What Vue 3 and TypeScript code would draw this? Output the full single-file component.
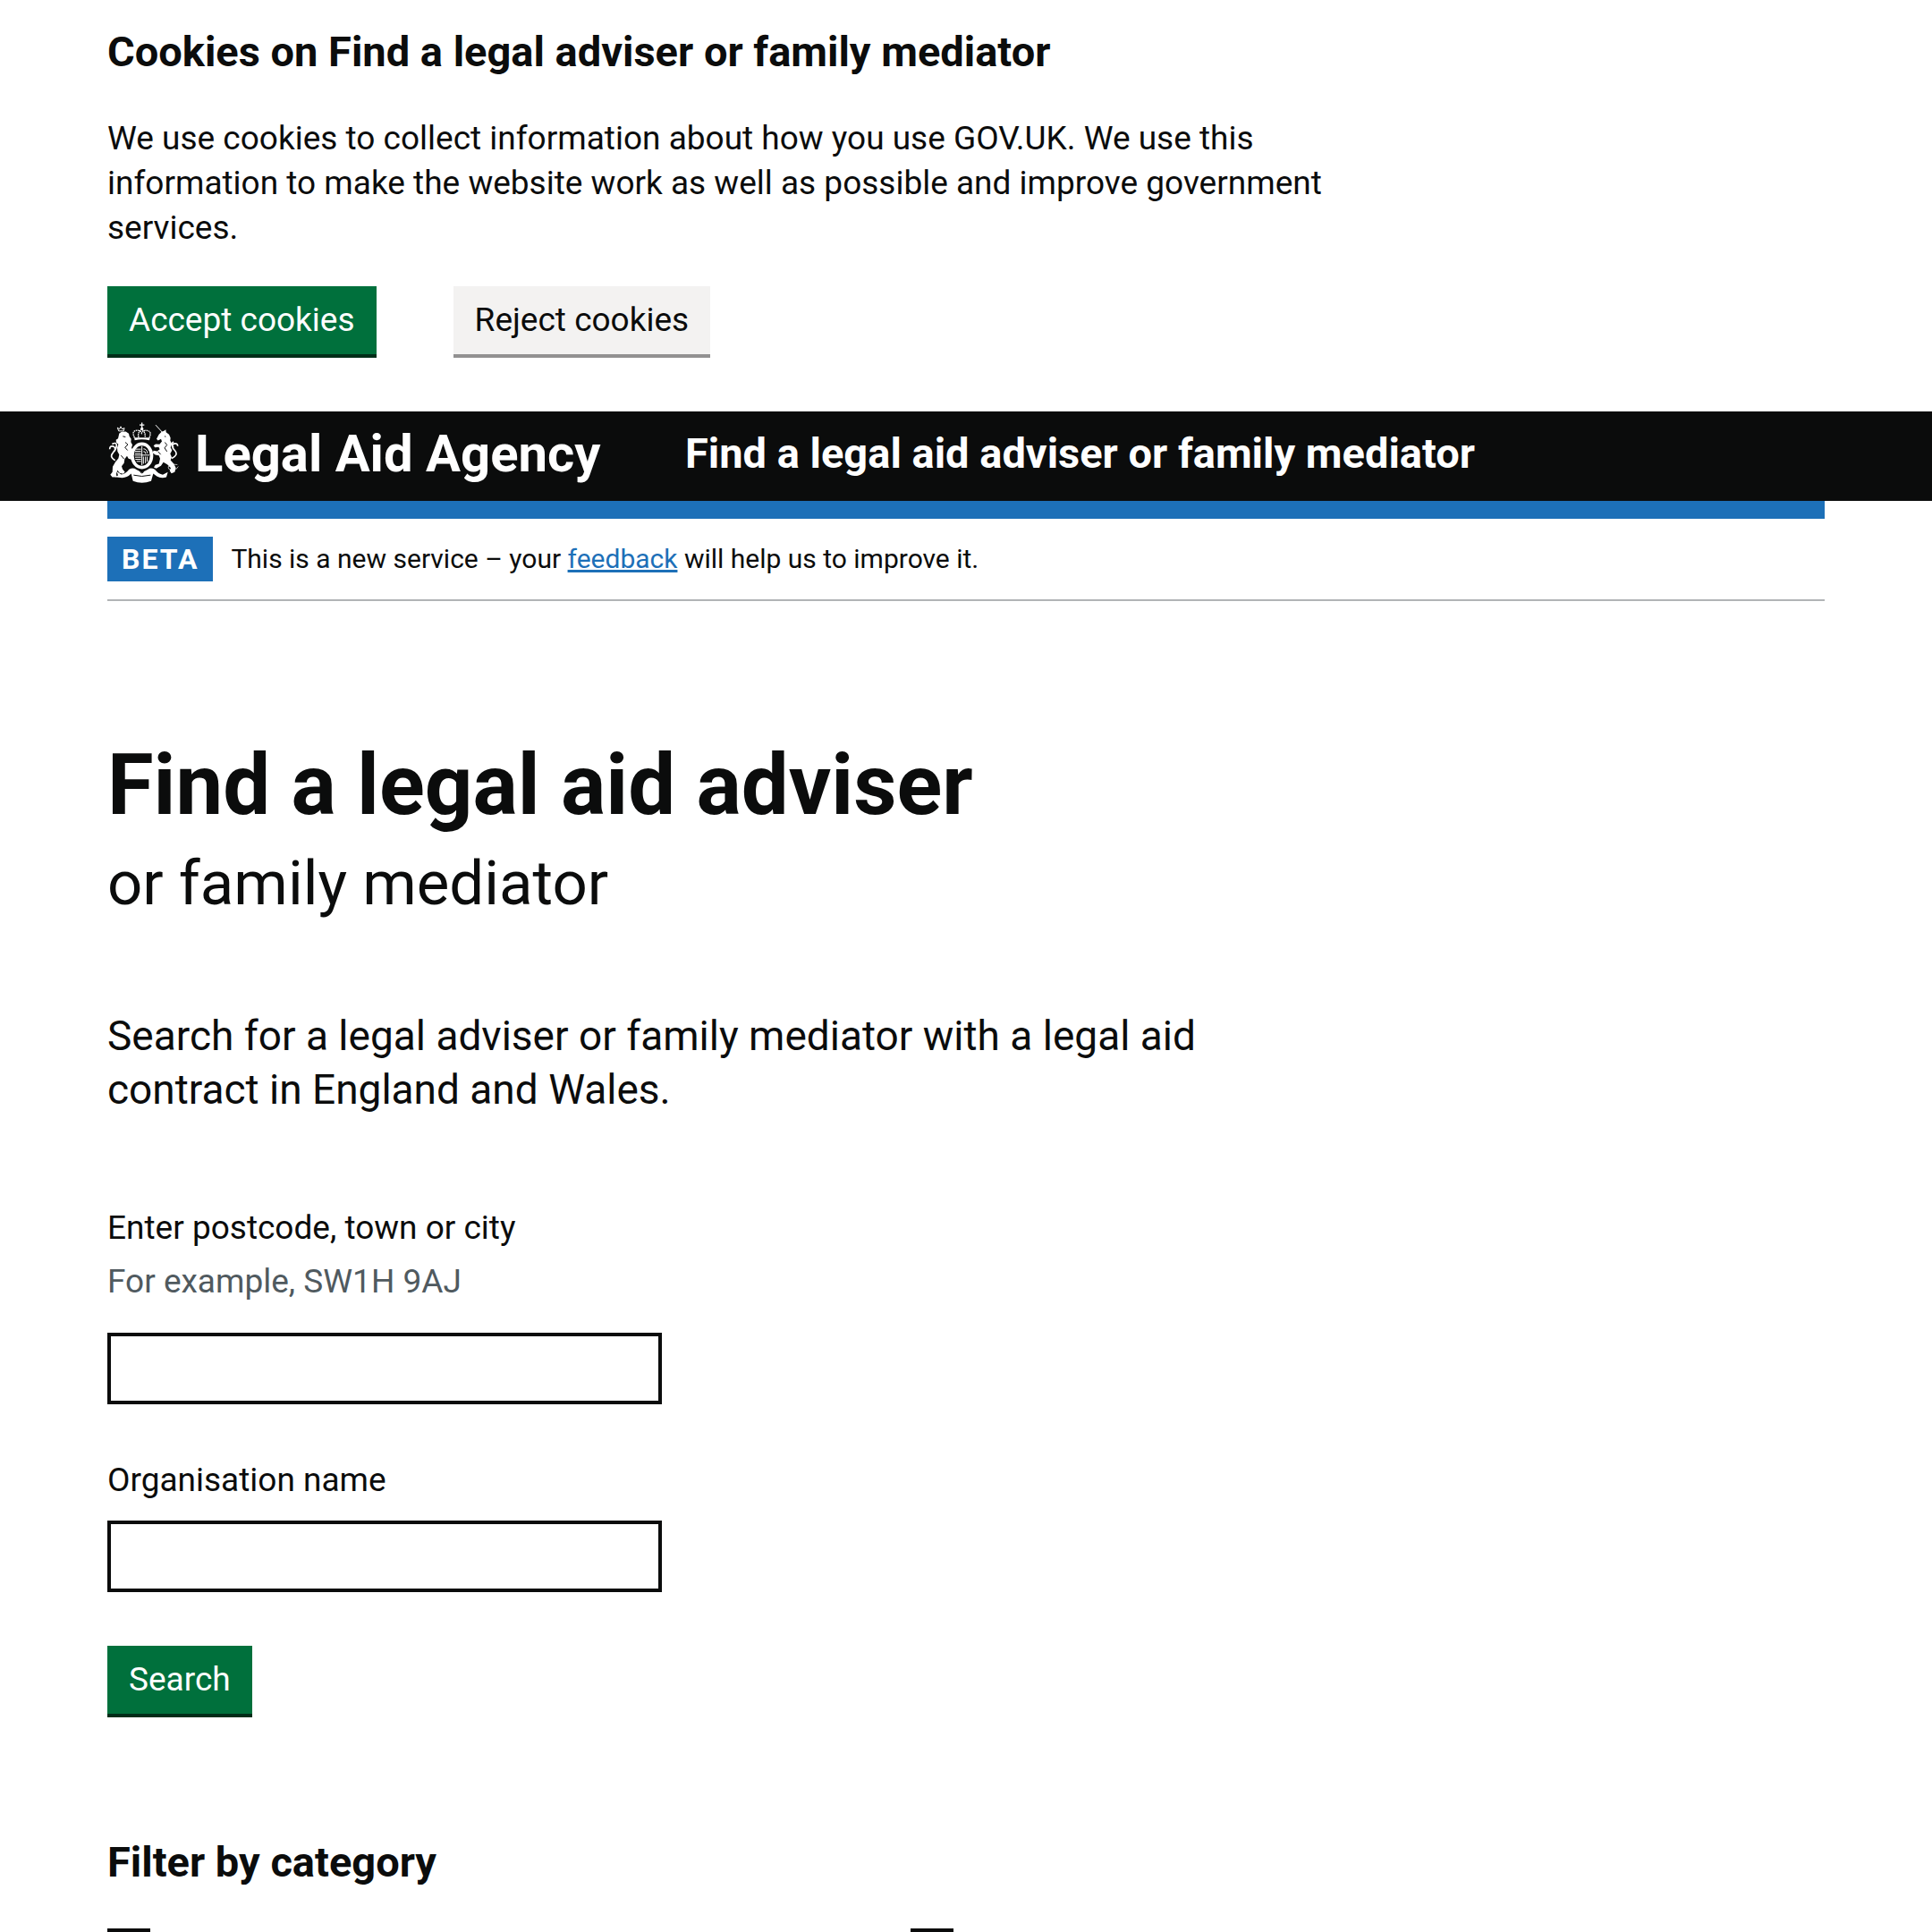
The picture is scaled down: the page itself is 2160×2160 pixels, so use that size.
<script setup lang="ts">
import { ref } from 'vue'

const postcode = ref('')
const organisation = ref('')
const categories = ['First category', 'Second category']
</script>

<template>
  <div class="page">
    <section class="cookies container" aria-label="Cookies on Find a legal adviser or family mediator">
      <h2 class="heading-m">Cookies on Find a legal adviser or family mediator</h2>
      <p class="body two-thirds">
        We use cookies to collect information about how you use GOV.UK. We use this information to make the website work as well as possible and improve government services.
      </p>
      <div class="button-row">
        <button type="button" class="button">Accept cookies</button>
        <button type="button" class="button secondary">Reject cookies</button>
      </div>
    </section>

    <header class="header">
      <div class="container header-inner">
        <a class="logo" href="#">
          <svg class="crest" viewBox="30 30 240 207" aria-hidden="true">
            <g fill="#fff">
              <!-- crown finial and band -->
              <path d="M144 30h4v6h6v4h-6v8h-4v-8h-6v-4h6z" />
              <circle cx="146" cy="51" r="5" />
              <path d="M120 80h53l-2 9q-25-5-49 0z" />
              <!-- garter -->
              <ellipse cx="146" cy="141" rx="38" ry="45" />
              <!-- lion -->
              <path d="M70 66l8-5 14-1 10 7 2 9 6 9-1 10 5 9-3 11 6 8-5 12 4 12-5 7-10-3-5-9-8 10-2 14-8 10 3 10 8 10-6 6-12-3-7-9-4 12 1 10-14 1-7-8 7-9 1-18 9-16 10-12 3-13-6-10-1-13 4-11-7-6-1-9 7-5z" />
              <!-- unicorn -->
              <path d="M203 70l9-9 8-3 6-5 1 9 10 8 5 11-1 10 6 10-5 12 5 10-6 11 5 12-4 10 11 12 7 14-4 14-11 4-6-9 4-9-12-12-13-7-8 12-16 9-8-4 5-8 12-4 4-17-4-11-12-2-9-7 3-7 12 2 9-7-4-7-12 1-5-6 7-5 13 1 8-10-3-8-10 5-5-5z" />
              <!-- motto scroll -->
              <path d="M62 194l15 10q14-1 26-17 14-8 28 1l15 10 15-10q14-9 28-1 13 16 27 18l17-9-5 17q-18 5-32-3l-12-9-7 25q-31 12-61 0l-6-25q-14 14-30 14l-26-3 12-5z" />
            </g>
            <g fill="none" stroke="#fff" stroke-width="4">
              <path d="M121 80q-11-23 9-24 12 0 15 9 4-9 15-9 21 2 11 24M135 80q-5-16 10-28 15 12 11 28" stroke-dasharray="5 2" />
              <path d="M68 58l-4-11 7 5 4-9 5 9 7-4-2 10z" stroke-width="3" />
              <path d="M192 38l22 24" stroke-width="3" />
              <path d="M56 157q-20-11-7-26 13-13 2-21-13-4-13 9m8-17q15-8 15 5-2 15-11 22" stroke-width="5" />
              <path d="M246 150q24-12 10-27-14-14-3-22 13-4 13 8m-14 5q-10-13 0-20" stroke-width="5" />
              <path d="M234 178l10-5 8 8-7 8-9-4zm18-8l13 1m-5 16l8-10" stroke-width="2" />
            </g>
            <ellipse cx="146" cy="141" rx="27" ry="34" fill="#0b0c0c" />
            <!-- quartered shield -->
            <g fill="none" stroke="#fff" stroke-width="3">
              <path d="M122 139h49M146 109v64M126 119h17m-20 7h20m-20 7h20m8-15q11-1 14 15M151 127q7-2 8 8M123 146h20m-19 7h19m-15 7h15m8-16v24m7-24v22m6-22v17" />
            </g>
            <g fill="none" stroke="#0b0c0c" stroke-width="3">
              <path d="M82 76l9 2M90 96l9 8-10 9 9 10M76 140l10 12M222 76l4 1M223 96l7 9-8 10 8 12M200 127l9 10M124 184q22 16 45 0M118 206q27 8 57 0" />
              <circle cx="146" cy="194" r="5" />
            </g>
          </svg>
          <span>Legal Aid Agency</span>
        </a>
        <a class="service" href="#">Find a legal aid adviser or family mediator</a>
      </div>
    </header>

    <div class="container">
      <div class="phase">
        <strong class="tag">BETA</strong>
        <span>This is a new service – your <a class="link" href="#">feedback</a> will help us to improve it.</span>
      </div>

      <main>
        <h1 class="title">Find a legal aid adviser <span class="subtitle">or family mediator</span></h1>
        <p class="lead two-thirds">Search for a legal adviser or family mediator with a legal aid contract in England and Wales.</p>

        <form @submit.prevent>
          <div class="field">
            <label for="postcode">Enter postcode, town or city</label>
            <span id="postcode-hint" class="hint">For example, SW1H 9AJ</span>
            <input id="postcode" v-model="postcode" class="input" type="text" aria-describedby="postcode-hint">
          </div>
          <div class="field">
            <label for="organisation">Organisation name</label>
            <input id="organisation" v-model="organisation" class="input" type="text">
          </div>
          <button type="submit" class="button">Search</button>

          <fieldset class="filters">
            <legend class="heading-m">Filter by category</legend>
            <div class="options">
              <input v-for="name in categories" :key="name" class="checkbox" type="checkbox" :aria-label="name">
            </div>
          </fieldset>
        </form>
      </main>
    </div>
  </div>
</template>

<style>
body {
  margin: 0;
  background: #fff;
}
</style>

<style scoped>
.page {
  height: 100vh;
  overflow: hidden;
  color: #0b0c0c;
  font-family: Roboto, "Liberation Sans", sans-serif;
  font-size: 37px;
  line-height: 50px;
}
.container {
  margin: 0 120px;
}
.cookies {
  padding: 28px 0 60px;
}
.heading-m {
  margin: 0;
  padding: 0;
  font-size: 47px;
  line-height: 60px;
  font-weight: 700;
}
.body {
  margin: 42px 0 40px;
}
.two-thirds {
  max-width: 1360px;
}
.button-row {
  display: flex;
  gap: 86px;
}
.button {
  display: block;
  height: 80px;
  margin: 0;
  padding: 0 24px 4px;
  border: 0;
  border-radius: 0;
  background: #00703c;
  box-shadow: inset 0 -4px 0 #002d18;
  color: #fff;
  font: inherit;
}
.secondary {
  background: #f3f2f1;
  box-shadow: inset 0 -4px 0 #929191;
  color: #0b0c0c;
}
.header {
  background: #0b0c0c;
  font-weight: 700;
}
.header-inner {
  display: flex;
  align-items: center;
  height: 94px;
  padding-bottom: 6px;
}
.header a {
  color: #fff;
  text-decoration: none;
}
.logo {
  display: flex;
  flex: 0 0 646px;
  align-items: center;
  gap: 18px;
  font-size: 58px;
}
.crest {
  width: 80px;
  height: 70px;
}
.service {
  font-size: 47px;
}
.phase {
  display: flex;
  align-items: center;
  gap: 20px;
  padding: 20px 0;
  border-top: 20px solid #1d70b8;
  border-bottom: 2px solid #b1b4b6;
  font-size: 30px;
}
.tag {
  padding: 0 16px;
  background: #1d70b8;
  color: #fff;
  font-size: 32px;
  letter-spacing: 2px;
}
.link {
  color: #1d70b8;
  text-decoration-thickness: 3px;
}
main {
  padding-top: 156px;
}
.title {
  margin: 0;
  font-size: 94px;
  line-height: 100px;
  font-weight: 700;
}
.subtitle {
  display: block;
  margin-top: 10px;
  font-size: 69px;
  font-weight: 400;
}
.lead {
  margin: 90px 0 100px;
  font-size: 46px;
  line-height: 60px;
}
.field {
  display: flex;
  flex-direction: column;
  align-items: flex-start;
  margin-bottom: 60px;
}
.hint {
  margin: 10px 0 32px;
  color: #505a5f;
}
.input {
  box-sizing: border-box;
  width: 620px;
  max-width: 100%;
  height: 80px;
  margin: 0;
  padding: 8px;
  border: 4px solid #0b0c0c;
  border-radius: 0;
  background: #fff;
  font: inherit;
}
label + .input {
  margin-top: 20px;
}
.filters {
  margin: 132px 0 0;
  padding: 0;
  border: 0;
}
.options {
  display: grid;
  grid-template-columns: 1fr 1fr;
  gap: 60px;
  max-width: 1736px;
  margin-top: 44px;
}
.checkbox {
  appearance: none;
  width: 48px;
  height: 48px;
  margin: 0;
  border: 4px solid #0b0c0c;
  background: #fff;
}
</style>
